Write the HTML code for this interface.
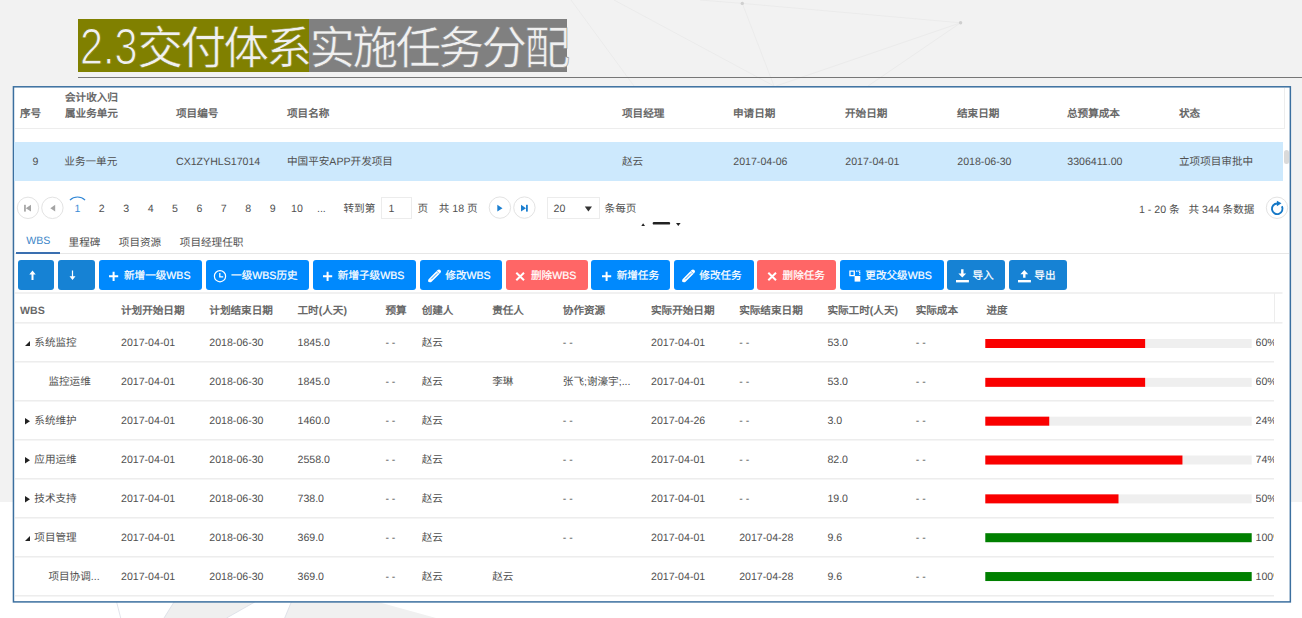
<!DOCTYPE html>
<html lang="zh-CN"><head><meta charset="utf-8"><title>2.3</title>
<style>
html,body{margin:0;padding:0}
body{text-rendering:geometricPrecision;width:1302px;height:618px;overflow:hidden;position:relative;background:#fff;font-family:"Liberation Sans",sans-serif;font-size:10.6px;color:#444}
div,span{box-sizing:border-box}
.abs{position:absolute}
.t{position:absolute;white-space:nowrap;line-height:16px;height:16px;font-size:10.6px;color:#505050}
.h{font-weight:bold;color:#686868}
.hl{position:absolute;height:1px;background:#ededed}
.vl{position:absolute;width:1px;background:#ededed}
.btn{position:absolute;top:260px;height:30px;border-radius:3px;background:#0089fd;color:#fff}
.btn.d{background:#1682d4}
.btn.r{background:#ff6666}
.btn .t{color:#fff;top:7.7px;-webkit-text-stroke:0.22px #fff}
svg{position:absolute;overflow:visible}
</style></head><body>

<div class="abs" style="left:0;top:0;width:1302px;height:502px;background:#f2f2f2"></div>
<svg id="deco" style="left:0;top:0" width="1302" height="618" viewBox="0 0 1302 618"><g stroke="#ebebeb" stroke-width="1" fill="none"><path d="M742.3 3.4 L960.6 22.8 M742.3 3.4 L774 86 M960.6 22.8 L776 86 M960.6 22.8 L868 86 M571 0 L634 86 M614 0 L774 86 M700 0 L742.3 3.4"/></g><circle cx="742.3" cy="3.4" r="1.7" fill="#cfcfcf"/><circle cx="960.6" cy="22.8" r="1.7" fill="#cfcfcf"/><path d="M174 602 L254.8 602 L226.6 618 L164 618 Z" fill="#efefef"/><path d="M291.3 602 L378 602 L436 618 L284.7 618 Z" fill="#f0f0f0"/><path d="M116.6 602 L120.7 618 M254.8 602 L226.6 618 M174 602 L164 618 M291.3 602 L284.7 618" stroke="#d9dde6" stroke-width="0.8" fill="none"/></svg>
<div class="abs" style="left:78px;top:19px;height:53px;width:231px;background:#808000"></div>
<div class="abs" style="left:309px;top:19px;height:53px;width:258px;background:#808080"></div>
<div class="abs" id="title" style="left:78px;top:21.9px;height:53px;line-height:53px;font-size:45.6px;letter-spacing:-2.6px;color:#f0f0f0;white-space:nowrap"><span style="-webkit-text-stroke:0.5px #808000"><span id="tnum" style="display:inline-block;width:59.5px;height:53px;vertical-align:top;font-size:50.8px;line-height:53px;letter-spacing:0;position:relative;top:-1.7px;-webkit-text-stroke:1.1px #808000"><span style="display:inline-block;transform:scaleX(0.815);transform-origin:0 50%;margin-left:1.6px">2.3</span></span>交付体系</span><span style="-webkit-text-stroke:0.5px #808080">实施任务分配</span></div>
<div class="abs" style="left:78px;top:77px;width:1224px;height:1px;background:#777"></div>
<svg style="left:0;top:0" width="1302" height="618" viewBox="0 0 1302 618"><rect x="13.45" y="86.8" width="1276.9" height="515.1" fill="#fff" stroke="#3b6f9f" stroke-width="1.5"/></svg>
<div class="t h" style="left:20px;top:106.00px;">序号</div>
<div class="t h" style="left:176px;top:106.00px;">项目编号</div>
<div class="t h" style="left:287px;top:106.00px;">项目名称</div>
<div class="t h" style="left:622px;top:106.00px;">项目经理</div>
<div class="t h" style="left:733px;top:106.00px;">申请日期</div>
<div class="t h" style="left:845px;top:106.00px;">开始日期</div>
<div class="t h" style="left:957px;top:106.00px;">结束日期</div>
<div class="t h" style="left:1067px;top:106.00px;">总预算成本</div>
<div class="t h" style="left:1179px;top:106.00px;">状态</div>
<div class="t h" style="left:65px;top:90.30px;">会计收入归</div>
<div class="t h" style="left:65px;top:106.00px;">属业务单元</div>
<div class="hl" style="left:15px;top:128px;width:1270px"></div>
<div class="vl" style="left:1284px;top:88px;height:41px"></div>
<div class="abs" style="left:14px;top:142px;width:1269px;height:39px;background:#cde9fd"></div>
<div class="t " style="left:32.6px;top:154.00px;">9</div>
<div class="t " style="left:64.3px;top:154.00px;">业务一单元</div>
<div class="t " style="left:176px;top:154.00px;">CX1ZYHLS17014</div>
<div class="t " style="left:287px;top:154.00px;">中国平安APP开发项目</div>
<div class="t " style="left:622px;top:154.00px;">赵云</div>
<div class="t " style="left:733.3px;top:154.00px;">2017-04-06</div>
<div class="t " style="left:845.3px;top:154.00px;">2017-04-01</div>
<div class="t " style="left:957.3px;top:154.00px;">2018-06-30</div>
<div class="t " style="left:1067.3px;top:154.00px;">3306411.00</div>
<div class="t " style="left:1179px;top:154.00px;">立项项目审批中</div>
<div class="abs" style="left:1284px;top:150px;width:5px;height:14px;background:#dadada;border-radius:2.5px"></div>
<svg style="left:0;top:0" width="1302" height="618" viewBox="0 0 1302 618"><g fill="#fff" stroke="#e3e3e3" stroke-width="1"><circle cx="28" cy="207.85" r="10.7"/><circle cx="52.4" cy="207.85" r="10.7"/><circle cx="499.9" cy="207.6" r="10.7"/><circle cx="524.4" cy="207.6" r="10.7"/><circle cx="1277" cy="207.8" r="10.7"/></g></svg>
<svg style="left:0;top:0" width="1302" height="618" viewBox="0 0 1302 618"><path d="M69.9 200.1 A10.9 10.9 0 0 1 85.1 200.1" fill="none" stroke="#2f86d6" stroke-width="1.2"/></svg>
<div class="t" style="left:65.4px;width:24px;text-align:center;top:201px;color:#3c8dd6;">1</div>
<div class="t" style="left:89.8px;width:24px;text-align:center;top:201px;">2</div>
<div class="t" style="left:114.2px;width:24px;text-align:center;top:201px;">3</div>
<div class="t" style="left:138.6px;width:24px;text-align:center;top:201px;">4</div>
<div class="t" style="left:163.0px;width:24px;text-align:center;top:201px;">5</div>
<div class="t" style="left:187.4px;width:24px;text-align:center;top:201px;">6</div>
<div class="t" style="left:211.8px;width:24px;text-align:center;top:201px;">7</div>
<div class="t" style="left:236.2px;width:24px;text-align:center;top:201px;">8</div>
<div class="t" style="left:260.6px;width:24px;text-align:center;top:201px;">9</div>
<div class="t" style="left:285.0px;width:24px;text-align:center;top:201px;">10</div>
<div class="t" style="left:309.4px;width:24px;text-align:center;top:201px">...</div>
<div class="t " style="left:343.5px;top:201.10px;">转到第</div>
<div class="abs" style="left:381px;top:197px;width:31px;height:22px;border:1px solid #ececec;background:#fff"></div>
<div class="t " style="left:388.5px;top:201.10px;">1</div>
<div class="t " style="left:417.5px;top:201.10px;">页</div>
<div class="t " style="left:438.8px;top:201.10px;">共 18 页</div>
<div class="abs" style="left:547px;top:197px;width:53px;height:22px;border:1px solid #ececec;background:#fff"></div>
<div class="t " style="left:553.6px;top:201.10px;">20</div>
<div class="t " style="left:604.6px;top:201.10px;">条每页</div>
<div class="t " style="left:1139px;top:201.50px;">1 - 20 条&nbsp;&nbsp;&nbsp;共 344 条数据</div>
<svg style="left:0;top:0" width="1302" height="618" viewBox="0 0 1302 618"><g fill="#a4a4a4"><rect x="24.1" y="204.8" width="1.7" height="6.8"/><path d="M31 204.8 L31 211.6 L25.8 208.2 Z"/><path d="M55.2 204.8 L55.2 211.6 L50.3 208.2 Z"/></g><g fill="#1c7fd0"><path d="M497.3 204.8 L497.3 211.6 L502.5 208.2 Z"/><path d="M521 204.8 L521 211.6 L526 208.2 Z"/><rect x="526" y="204.8" width="1.8" height="6.8"/></g><path d="M584.8 206.4 L592 206.4 L588.4 211.6 Z" fill="#333"/><path d="M641.3 226.1 L645 226.1 L643.15 223.2 Z" fill="#222"/><rect x="652.7" y="221.9" width="17.4" height="2.7" rx="1.2" fill="#222"/><path d="M676 223 L680.6 223 L678.3 226 Z" fill="#222"/><g fill="none" stroke="#1477c6" stroke-width="1.9"><path d="M1281.9 206.3 A5.3 5.3 0 1 1 1277.2 203.5"/></g><path d="M1276.9 200.8 L1281.5 203.3 L1276.9 206.3 Z" fill="#1477c6"/></svg>
<div class="hl" style="left:15px;top:253px;width:1274px;background:#e7e7e7"></div>
<div class="abs" style="left:16px;top:252px;width:44px;height:2px;background:#3a6fb0"></div>
<div class="t " style="left:26.3px;top:232.80px;color:#3c86c8">WBS</div>
<div class="t " style="left:68.6px;top:235.40px;">里程碑</div>
<div class="t " style="left:118.8px;top:235.40px;">项目资源</div>
<div class="t " style="left:179.8px;top:235.40px;">项目经理任职</div>
<div class="btn d" style="left:17.6px;width:36.9px">
<svg style="left:10.2px;top:11.3px" width="9" height="9" viewBox="0 0 9 9"><path d="M4.5 -0.5 L7.7 3.6 L5.5 3.6 L5.5 9 L3.5 9 L3.5 3.6 L1.3 3.6 Z" fill="#fff"/></svg>
</div>
<div class="btn d" style="left:58px;width:36.9px">
<svg style="left:10.3px;top:11.3px" width="9" height="9" viewBox="0 0 9 9"><path d="M4.5 9 L7.5 5.2 L5.1 5.2 L5.1 -0.6 L3.9 -0.6 L3.9 5.2 L1.5 5.2 Z" fill="#fff"/></svg>
</div>
<div class="btn " style="left:98.7px;width:103.5px">
<svg style="left:8.5px;top:9.5px" width="13" height="13" viewBox="0 0 13 13"><path d="M5.6 1.7 h2 v3.6 h3.6 v2 h-3.6 v3.6 h-2 v-3.6 h-3.6 v-2 h3.6 z" fill="#fff"/></svg>
<div class="t" style="left:25.3px">新增一级WBS</div>
</div>
<div class="btn " style="left:205.8px;width:103.0px">
<svg style="left:8.5px;top:9.5px" width="13" height="13" viewBox="0 0 13 13"><circle cx="6" cy="6.2" r="5.6" fill="none" stroke="#fff" stroke-width="1.2"/><path d="M5.8 2.9 V6.9 H9.2" fill="none" stroke="#fff" stroke-width="1.3"/></svg>
<div class="t" style="left:25.3px">一级WBS历史</div>
</div>
<div class="btn " style="left:312.5px;width:103.2px">
<svg style="left:8.5px;top:9.5px" width="13" height="13" viewBox="0 0 13 13"><path d="M5.6 1.7 h2 v3.6 h3.6 v2 h-3.6 v3.6 h-2 v-3.6 h-3.6 v-2 h3.6 z" fill="#fff"/></svg>
<div class="t" style="left:25.3px">新增子级WBS</div>
</div>
<div class="btn " style="left:420px;width:82.0px">
<svg style="left:8.5px;top:9.5px" width="13" height="13" viewBox="0 0 13 13"><g transform="translate(-0.4 -0.7)"><path d="M1.6 11 L10.4 2.2" stroke="#fff" stroke-width="3.9" stroke-linecap="round" fill="none"/><path d="M-0.4 12.6 L0.4 9.4 L2.8 11.8 Z" fill="#fff"/><path d="M2.6 10 L8.6 4" stroke="#0089fd" stroke-width="0.9" fill="none"/><path d="M8.3 1.9 L10.8 4.4" stroke="#0089fd" stroke-width="0.7" fill="none"/></g></svg>
<div class="t" style="left:25.3px">修改WBS</div>
</div>
<div class="btn r" style="left:505.7px;width:82.0px">
<svg style="left:8.5px;top:9.5px" width="13" height="13" viewBox="0 0 13 13"><path d="M2.3 2.7 L10 10.3 M10 2.7 L2.3 10.3" stroke="#fff" stroke-width="2" fill="none"/></svg>
<div class="t" style="left:25.3px">删除WBS</div>
</div>
<div class="btn " style="left:591.4px;width:78.9px">
<svg style="left:8.5px;top:9.5px" width="13" height="13" viewBox="0 0 13 13"><path d="M5.6 1.7 h2 v3.6 h3.6 v2 h-3.6 v3.6 h-2 v-3.6 h-3.6 v-2 h3.6 z" fill="#fff"/></svg>
<div class="t" style="left:25.3px">新增任务</div>
</div>
<div class="btn " style="left:674px;width:79.5px">
<svg style="left:8.5px;top:9.5px" width="13" height="13" viewBox="0 0 13 13"><g transform="translate(-0.4 -0.7)"><path d="M1.6 11 L10.4 2.2" stroke="#fff" stroke-width="3.9" stroke-linecap="round" fill="none"/><path d="M-0.4 12.6 L0.4 9.4 L2.8 11.8 Z" fill="#fff"/><path d="M2.6 10 L8.6 4" stroke="#0089fd" stroke-width="0.9" fill="none"/><path d="M8.3 1.9 L10.8 4.4" stroke="#0089fd" stroke-width="0.7" fill="none"/></g></svg>
<div class="t" style="left:25.3px">修改任务</div>
</div>
<div class="btn r" style="left:757.3px;width:79.2px">
<svg style="left:8.5px;top:9.5px" width="13" height="13" viewBox="0 0 13 13"><path d="M2.3 2.7 L10 10.3 M10 2.7 L2.3 10.3" stroke="#fff" stroke-width="2" fill="none"/></svg>
<div class="t" style="left:25.3px">删除任务</div>
</div>
<div class="btn " style="left:840px;width:103.5px">
<svg style="left:8.5px;top:9.5px" width="13" height="13" viewBox="0 0 13 13"><path d="M0.3 0.5 h5.6 v5.8 h-5.6 z M1.6 1.8 v3.2 h3 v-3.2 z" fill="#fff" fill-rule="evenodd"/><rect x="5.6" y="6" width="5.7" height="5.6" fill="#fff"/><path d="M7 1.1 H10.7 V5" stroke="#fff" stroke-width="1.3" stroke-dasharray="1.5 0.8" fill="none"/></svg>
<div class="t" style="left:25.3px">更改父级WBS</div>
</div>
<div class="btn d" style="left:947.2px;width:58.1px">
<svg style="left:8.5px;top:9.5px" width="13" height="13" viewBox="0 0 13 13"><path d="M5.1 -0.8 h2.4 v4.2 h2.7 L6.3 7.6 L2.4 3.4 h2.7 z" fill="#fff"/><rect x="0" y="10" width="12.9" height="2.4" fill="#fff"/></svg>
<div class="t" style="left:25.3px">导入</div>
</div>
<div class="btn d" style="left:1009px;width:58.0px">
<svg style="left:8.5px;top:9.5px" width="13" height="13" viewBox="0 0 13 13"><path d="M5.1 7.8 h2.4 v-3.6 h2.7 L6.3 0 L2.4 4.2 h2.7 z" fill="#fff"/><rect x="0" y="10" width="12.9" height="2.4" fill="#fff"/></svg>
<div class="t" style="left:25.3px">导出</div>
</div>
<svg style="left:0;top:0" width="1302" height="618" viewBox="0 0 1302 618"><rect x="14.5" y="292.5" width="1268" height="1" fill="#e3e3e3"/><rect x="14.5" y="322.4" width="1268" height="1" fill="#e3e3e3"/></svg>
<div class="vl" style="left:1274px;top:293px;height:30px"></div>
<div class="t h" style="left:20px;top:303.10px;">WBS</div>
<div class="t h" style="left:121px;top:303.10px;">计划开始日期</div>
<div class="t h" style="left:209.3px;top:303.10px;">计划结束日期</div>
<div class="t h" style="left:297.5px;top:303.10px;">工时(人天)</div>
<div class="t h" style="left:385.4px;top:303.10px;">预算</div>
<div class="t h" style="left:421.7px;top:303.10px;">创建人</div>
<div class="t h" style="left:492.2px;top:303.10px;">责任人</div>
<div class="t h" style="left:562.8px;top:303.10px;">协作资源</div>
<div class="t h" style="left:651px;top:303.10px;">实际开始日期</div>
<div class="t h" style="left:739.2px;top:303.10px;">实际结束日期</div>
<div class="t h" style="left:827.4px;top:303.10px;">实际工时(人天)</div>
<div class="t h" style="left:915.7px;top:303.10px;">实际成本</div>
<div class="t h" style="left:986.5px;top:303.10px;">进度</div>
<svg style="left:0;top:0" width="1302" height="618" viewBox="0 0 1302 618"><rect x="14.5" y="361.35" width="1259.5" height="1" fill="#e3e3e3"/></svg>
<svg style="left:24.6px;top:340.9px" width="5" height="5" viewBox="0 0 5 5"><path d="M5 0 V5 H0 Z" fill="#222"/></svg>
<div class="t " style="left:34.3px;top:334.90px;">系统监控</div>
<div class="t " style="left:121px;top:334.90px;">2017-04-01</div>
<div class="t " style="left:209.3px;top:334.90px;">2018-06-30</div>
<div class="t " style="left:297.5px;top:334.90px;">1845.0</div>
<div class="t " style="left:385.4px;top:334.90px;">- -</div>
<div class="t " style="left:421.7px;top:334.90px;">赵云</div>
<div class="t " style="left:562.8px;top:334.90px;">- -</div>
<div class="t " style="left:651px;top:334.90px;">2017-04-01</div>
<div class="t " style="left:739.2px;top:334.90px;">- -</div>
<div class="t " style="left:827.4px;top:334.90px;">53.0</div>
<div class="t " style="left:915.7px;top:334.90px;">- -</div>
<svg style="left:0;top:0" width="1302" height="618" viewBox="0 0 1302 618"><rect x="985.3" y="339.00" width="266.4" height="9" fill="#efefef"/><rect x="985.3" y="339.00" width="159.84" height="9" fill="#fa0000"/></svg>
<div class="t" style="left:1255.5px;top:335.4px;width:18.3px;overflow:hidden">60%</div>
<svg style="left:0;top:0" width="1302" height="618" viewBox="0 0 1302 618"><rect x="14.5" y="400.35" width="1259.5" height="1" fill="#e3e3e3"/></svg>
<div class="t " style="left:48.4px;top:373.87px;">监控运维</div>
<div class="t " style="left:121px;top:373.87px;">2017-04-01</div>
<div class="t " style="left:209.3px;top:373.87px;">2018-06-30</div>
<div class="t " style="left:297.5px;top:373.87px;">1845.0</div>
<div class="t " style="left:385.4px;top:373.87px;">- -</div>
<div class="t " style="left:421.7px;top:373.87px;">赵云</div>
<div class="t " style="left:492.2px;top:373.87px;">李琳</div>
<div class="t " style="left:562.8px;top:373.87px;">张飞;谢濠宇;...</div>
<div class="t " style="left:651px;top:373.87px;">2017-04-01</div>
<div class="t " style="left:739.2px;top:373.87px;">- -</div>
<div class="t " style="left:827.4px;top:373.87px;">53.0</div>
<div class="t " style="left:915.7px;top:373.87px;">- -</div>
<svg style="left:0;top:0" width="1302" height="618" viewBox="0 0 1302 618"><rect x="985.3" y="377.84" width="266.4" height="9" fill="#efefef"/><rect x="985.3" y="377.84" width="159.84" height="9" fill="#fa0000"/></svg>
<div class="t" style="left:1255.5px;top:374.4px;width:18.3px;overflow:hidden">60%</div>
<svg style="left:0;top:0" width="1302" height="618" viewBox="0 0 1302 618"><rect x="14.5" y="439.35" width="1259.5" height="1" fill="#e3e3e3"/></svg>
<svg style="left:24.8px;top:417.6px" width="5" height="6.4" viewBox="0 0 5 6.4"><path d="M0 0 L5 3.2 L0 6.4 Z" fill="#222"/></svg>
<div class="t " style="left:34.3px;top:412.84px;">系统维护</div>
<div class="t " style="left:121px;top:412.84px;">2017-04-01</div>
<div class="t " style="left:209.3px;top:412.84px;">2018-06-30</div>
<div class="t " style="left:297.5px;top:412.84px;">1460.0</div>
<div class="t " style="left:385.4px;top:412.84px;">- -</div>
<div class="t " style="left:421.7px;top:412.84px;">赵云</div>
<div class="t " style="left:562.8px;top:412.84px;">- -</div>
<div class="t " style="left:651px;top:412.84px;">2017-04-26</div>
<div class="t " style="left:739.2px;top:412.84px;">- -</div>
<div class="t " style="left:827.4px;top:412.84px;">3.0</div>
<div class="t " style="left:915.7px;top:412.84px;">- -</div>
<svg style="left:0;top:0" width="1302" height="618" viewBox="0 0 1302 618"><rect x="985.3" y="416.68" width="266.4" height="9" fill="#efefef"/><rect x="985.3" y="416.68" width="63.94" height="9" fill="#fa0000"/></svg>
<div class="t" style="left:1255.5px;top:413.3px;width:18.3px;overflow:hidden">24%</div>
<svg style="left:0;top:0" width="1302" height="618" viewBox="0 0 1302 618"><rect x="14.5" y="478.35" width="1259.5" height="1" fill="#e3e3e3"/></svg>
<svg style="left:24.8px;top:456.6px" width="5" height="6.4" viewBox="0 0 5 6.4"><path d="M0 0 L5 3.2 L0 6.4 Z" fill="#222"/></svg>
<div class="t " style="left:34.3px;top:451.81px;">应用运维</div>
<div class="t " style="left:121px;top:451.81px;">2017-04-01</div>
<div class="t " style="left:209.3px;top:451.81px;">2018-06-30</div>
<div class="t " style="left:297.5px;top:451.81px;">2558.0</div>
<div class="t " style="left:385.4px;top:451.81px;">- -</div>
<div class="t " style="left:421.7px;top:451.81px;">赵云</div>
<div class="t " style="left:562.8px;top:451.81px;">- -</div>
<div class="t " style="left:651px;top:451.81px;">2017-04-01</div>
<div class="t " style="left:739.2px;top:451.81px;">- -</div>
<div class="t " style="left:827.4px;top:451.81px;">82.0</div>
<div class="t " style="left:915.7px;top:451.81px;">- -</div>
<svg style="left:0;top:0" width="1302" height="618" viewBox="0 0 1302 618"><rect x="985.3" y="455.52" width="266.4" height="9" fill="#efefef"/><rect x="985.3" y="455.52" width="197.14" height="9" fill="#fa0000"/></svg>
<div class="t" style="left:1255.5px;top:452.3px;width:18.3px;overflow:hidden">74%</div>
<svg style="left:0;top:0" width="1302" height="618" viewBox="0 0 1302 618"><rect x="14.5" y="517.35" width="1259.5" height="1" fill="#e3e3e3"/></svg>
<svg style="left:24.8px;top:495.6px" width="5" height="6.4" viewBox="0 0 5 6.4"><path d="M0 0 L5 3.2 L0 6.4 Z" fill="#222"/></svg>
<div class="t " style="left:34.3px;top:490.78px;">技术支持</div>
<div class="t " style="left:121px;top:490.78px;">2017-04-01</div>
<div class="t " style="left:209.3px;top:490.78px;">2018-06-30</div>
<div class="t " style="left:297.5px;top:490.78px;">738.0</div>
<div class="t " style="left:385.4px;top:490.78px;">- -</div>
<div class="t " style="left:421.7px;top:490.78px;">赵云</div>
<div class="t " style="left:562.8px;top:490.78px;">- -</div>
<div class="t " style="left:651px;top:490.78px;">2017-04-01</div>
<div class="t " style="left:739.2px;top:490.78px;">- -</div>
<div class="t " style="left:827.4px;top:490.78px;">19.0</div>
<div class="t " style="left:915.7px;top:490.78px;">- -</div>
<svg style="left:0;top:0" width="1302" height="618" viewBox="0 0 1302 618"><rect x="985.3" y="494.36" width="266.4" height="9" fill="#efefef"/><rect x="985.3" y="494.36" width="133.20" height="9" fill="#fa0000"/></svg>
<div class="t" style="left:1255.5px;top:491.3px;width:18.3px;overflow:hidden">50%</div>
<svg style="left:0;top:0" width="1302" height="618" viewBox="0 0 1302 618"><rect x="14.5" y="556.35" width="1259.5" height="1" fill="#e3e3e3"/></svg>
<svg style="left:24.6px;top:535.8px" width="5" height="5" viewBox="0 0 5 5"><path d="M5 0 V5 H0 Z" fill="#222"/></svg>
<div class="t " style="left:34.3px;top:529.75px;">项目管理</div>
<div class="t " style="left:121px;top:529.75px;">2017-04-01</div>
<div class="t " style="left:209.3px;top:529.75px;">2018-06-30</div>
<div class="t " style="left:297.5px;top:529.75px;">369.0</div>
<div class="t " style="left:385.4px;top:529.75px;">- -</div>
<div class="t " style="left:421.7px;top:529.75px;">赵云</div>
<div class="t " style="left:562.8px;top:529.75px;">- -</div>
<div class="t " style="left:651px;top:529.75px;">2017-04-01</div>
<div class="t " style="left:739.2px;top:529.75px;">2017-04-28</div>
<div class="t " style="left:827.4px;top:529.75px;">9.6</div>
<div class="t " style="left:915.7px;top:529.75px;">- -</div>
<svg style="left:0;top:0" width="1302" height="618" viewBox="0 0 1302 618"><rect x="985.3" y="533.20" width="266.4" height="9" fill="#efefef"/><rect x="985.3" y="533.20" width="266.40" height="9" fill="#008000"/></svg>
<div class="t" style="left:1255.5px;top:530.2px;width:18.3px;overflow:hidden">100%</div>
<svg style="left:0;top:0" width="1302" height="618" viewBox="0 0 1302 618"><rect x="14.5" y="595.35" width="1259.5" height="1" fill="#e3e3e3"/></svg>
<div class="t " style="left:48.4px;top:568.72px;">项目协调...</div>
<div class="t " style="left:121px;top:568.72px;">2017-04-01</div>
<div class="t " style="left:209.3px;top:568.72px;">2018-06-30</div>
<div class="t " style="left:297.5px;top:568.72px;">369.0</div>
<div class="t " style="left:385.4px;top:568.72px;">- -</div>
<div class="t " style="left:421.7px;top:568.72px;">赵云</div>
<div class="t " style="left:492.2px;top:568.72px;">赵云</div>
<div class="t " style="left:651px;top:568.72px;">2017-04-01</div>
<div class="t " style="left:739.2px;top:568.72px;">2017-04-28</div>
<div class="t " style="left:827.4px;top:568.72px;">9.6</div>
<div class="t " style="left:915.7px;top:568.72px;">- -</div>
<svg style="left:0;top:0" width="1302" height="618" viewBox="0 0 1302 618"><rect x="985.3" y="572.04" width="266.4" height="9" fill="#efefef"/><rect x="985.3" y="572.04" width="266.40" height="9" fill="#008000"/></svg>
<div class="t" style="left:1255.5px;top:569.2px;width:18.3px;overflow:hidden">100%</div>
</body></html>
